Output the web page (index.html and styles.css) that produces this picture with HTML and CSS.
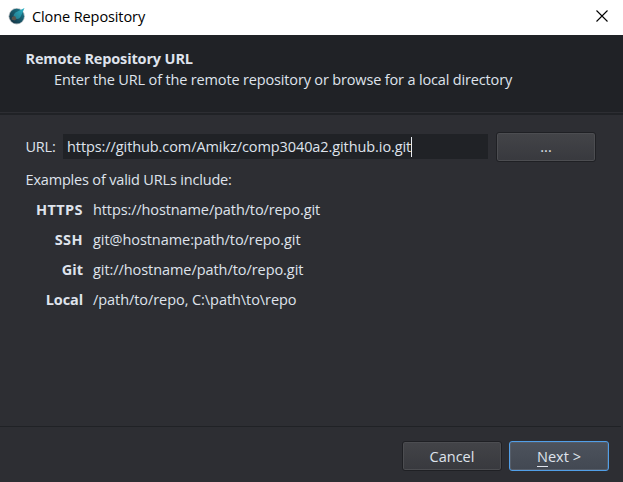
FILE: index.html
```html
<!DOCTYPE html>
<html lang="en">
<head>
<meta charset="utf-8">
<title>Clone Repository</title>
<link rel="stylesheet" href="styles.css">
</head>
<body>
<div class="dialog">
  <div class="titlebar">
    <svg class="logo" width="18" height="18" viewBox="0 0 18 18">
      <defs>
        <linearGradient id="sea" x1="1" y1="0" x2="0" y2="1">
          <stop offset="0" stop-color="#1b7f92"/>
          <stop offset="1" stop-color="#142c3c"/>
        </linearGradient>
        <linearGradient id="comet" x1="1" y1="0" x2="0" y2="1">
          <stop offset="0" stop-color="#2cb5c8"/>
          <stop offset="1" stop-color="#23788a"/>
        </linearGradient>
      </defs>
      <circle cx="8.700" cy="9.200" r="8.200" fill="#8b989d" opacity=".6"/>
      <circle cx="8.700" cy="9.200" r="7.400" fill="url(#sea)"/>
      <path d="M16.500 1 L7.500 5.500 Q4 8.500 7 11.500 Q10.500 13 12.500 10 Z" fill="url(#comet)"/>
      <path d="M4 10 L7 9 L8.500 12 L6.500 13.500 L3.500 12.500 Z" fill="#59534c"/>
    </svg>
    <span class="title">Clone Repository</span>
    <svg class="close" width="12" height="12" viewBox="0 0 12 12"><path d="M.5 .5 L11.500 11.500 M11.500 .5 L.5 11.500" stroke="#000" stroke-width="1.100"/></svg>
  </div>
  <header class="header">
    <div class="heading">Remote Repository URL</div>
    <div class="subtitle">Enter the URL of the remote repository or browse for a local directory</div>
  </header>
  <main class="content">
    <div class="url-row">
      <label class="label">URL:</label>
      <div class="field"><span class="value">https://github.com/Amikz/comp3040a2.github.io.git</span><i class="caret"></i></div>
      <div class="button browse"><span>...</span></div>
    </div>
    <div class="examples-title">Examples of valid URLs include:</div>
    <div class="examples">
      <b class="wide">HTTPS</b><span class="web">https://hostname/path/to/repo.git</span>
      <b class="wide">SSH</b><span>git@hostname:path/to/repo.git</span>
      <b>Git</b><span>git://hostname/path/to/repo.git</span>
      <b class="local">Local</b><span>/path/to/repo, C:\path\to\repo</span>
    </div>
  </main>
  <footer class="footer">
    <div class="button cancel"><span>Cancel</span></div>
    <div class="button next"><span><span class="key">N</span>ext &gt;</span></div>
  </footer>
</div>
</body>
</html>
```
FILE: styles.css
```css
* { box-sizing: border-box; }
body {
  margin: 0;
  font: 14.5px/20px "Open Sans", "Noto Sans", sans-serif;
  color: #dfe3ec;
  white-space: nowrap;
}
.dialog { width: 623px; height: 482px; display: flex; flex-direction: column; background: #2d2e33; overflow: hidden; }
.titlebar { height: 35px; background: #fff; color: #000; display: flex; align-items: center; padding: 0 15px 3px 8px; }
.title { margin: 1px 0 0 6px; letter-spacing: -.1px; }
.close { margin-left: auto; }
.header { height: 80px; background: linear-gradient(#2d2e33, #2d2e33) 0 77px / 100% 1px no-repeat #202226; padding: 13px 0 0 25.5px; }
.heading { font-weight: 700; line-height: 21px; letter-spacing: -.15px; }
.subtitle { padding-left: 28.5px; line-height: 21px; letter-spacing: -.157px; }
.content { flex: 1; padding: 17px 27px 0 25.5px; }
.url-row { display: flex; height: 29px; align-items: center; }
.label { width: 37.5px; letter-spacing: -.2px; }
.field { width: 425px; height: 25px; background: #202226; display: flex; align-items: center; padding-left: 4px; }
.value { letter-spacing: -.085px; }
.caret { width: 1px; height: 20px; background: #e8ebf0; }
.button {
  height: 30px; border: 1px solid #1f2024; border-radius: 3px;
  box-shadow: inset 0 0 0 1px #4c4d51;
  background: linear-gradient(#434448, #38393e);
  display: flex; align-items: center; justify-content: center;
}
.browse { width: 100px; margin-left: 8px; }
.examples-title { margin-top: 9px; letter-spacing: -.18px; }
.examples { display: grid; grid-template-columns: 57.5px auto; column-gap: 10px; grid-auto-rows: 30px; line-height: 30px; margin-top: 5px; letter-spacing: -.065px; }
.examples b { text-align: right; letter-spacing: 0; }
.examples .wide { letter-spacing: .4px; }
.examples .local { letter-spacing: -.1px; }
.examples .web { letter-spacing: -.11px; }
.footer { height: 56px; border-top: 1px solid #202226; margin-right: 2px; padding: 14px 12px 0 0; display: flex; justify-content: flex-end; gap: 7px; }
.cancel { width: 100px; }
.next { width: 100px; border-color: #519fe8; background: linear-gradient(#4d535d, #424852); box-shadow: inset 0 0 0 1px #555d69; }
.cancel span, .next > span { padding-top: 2px; }
.key { box-shadow: 0 1px #dfe3ec; }
```
